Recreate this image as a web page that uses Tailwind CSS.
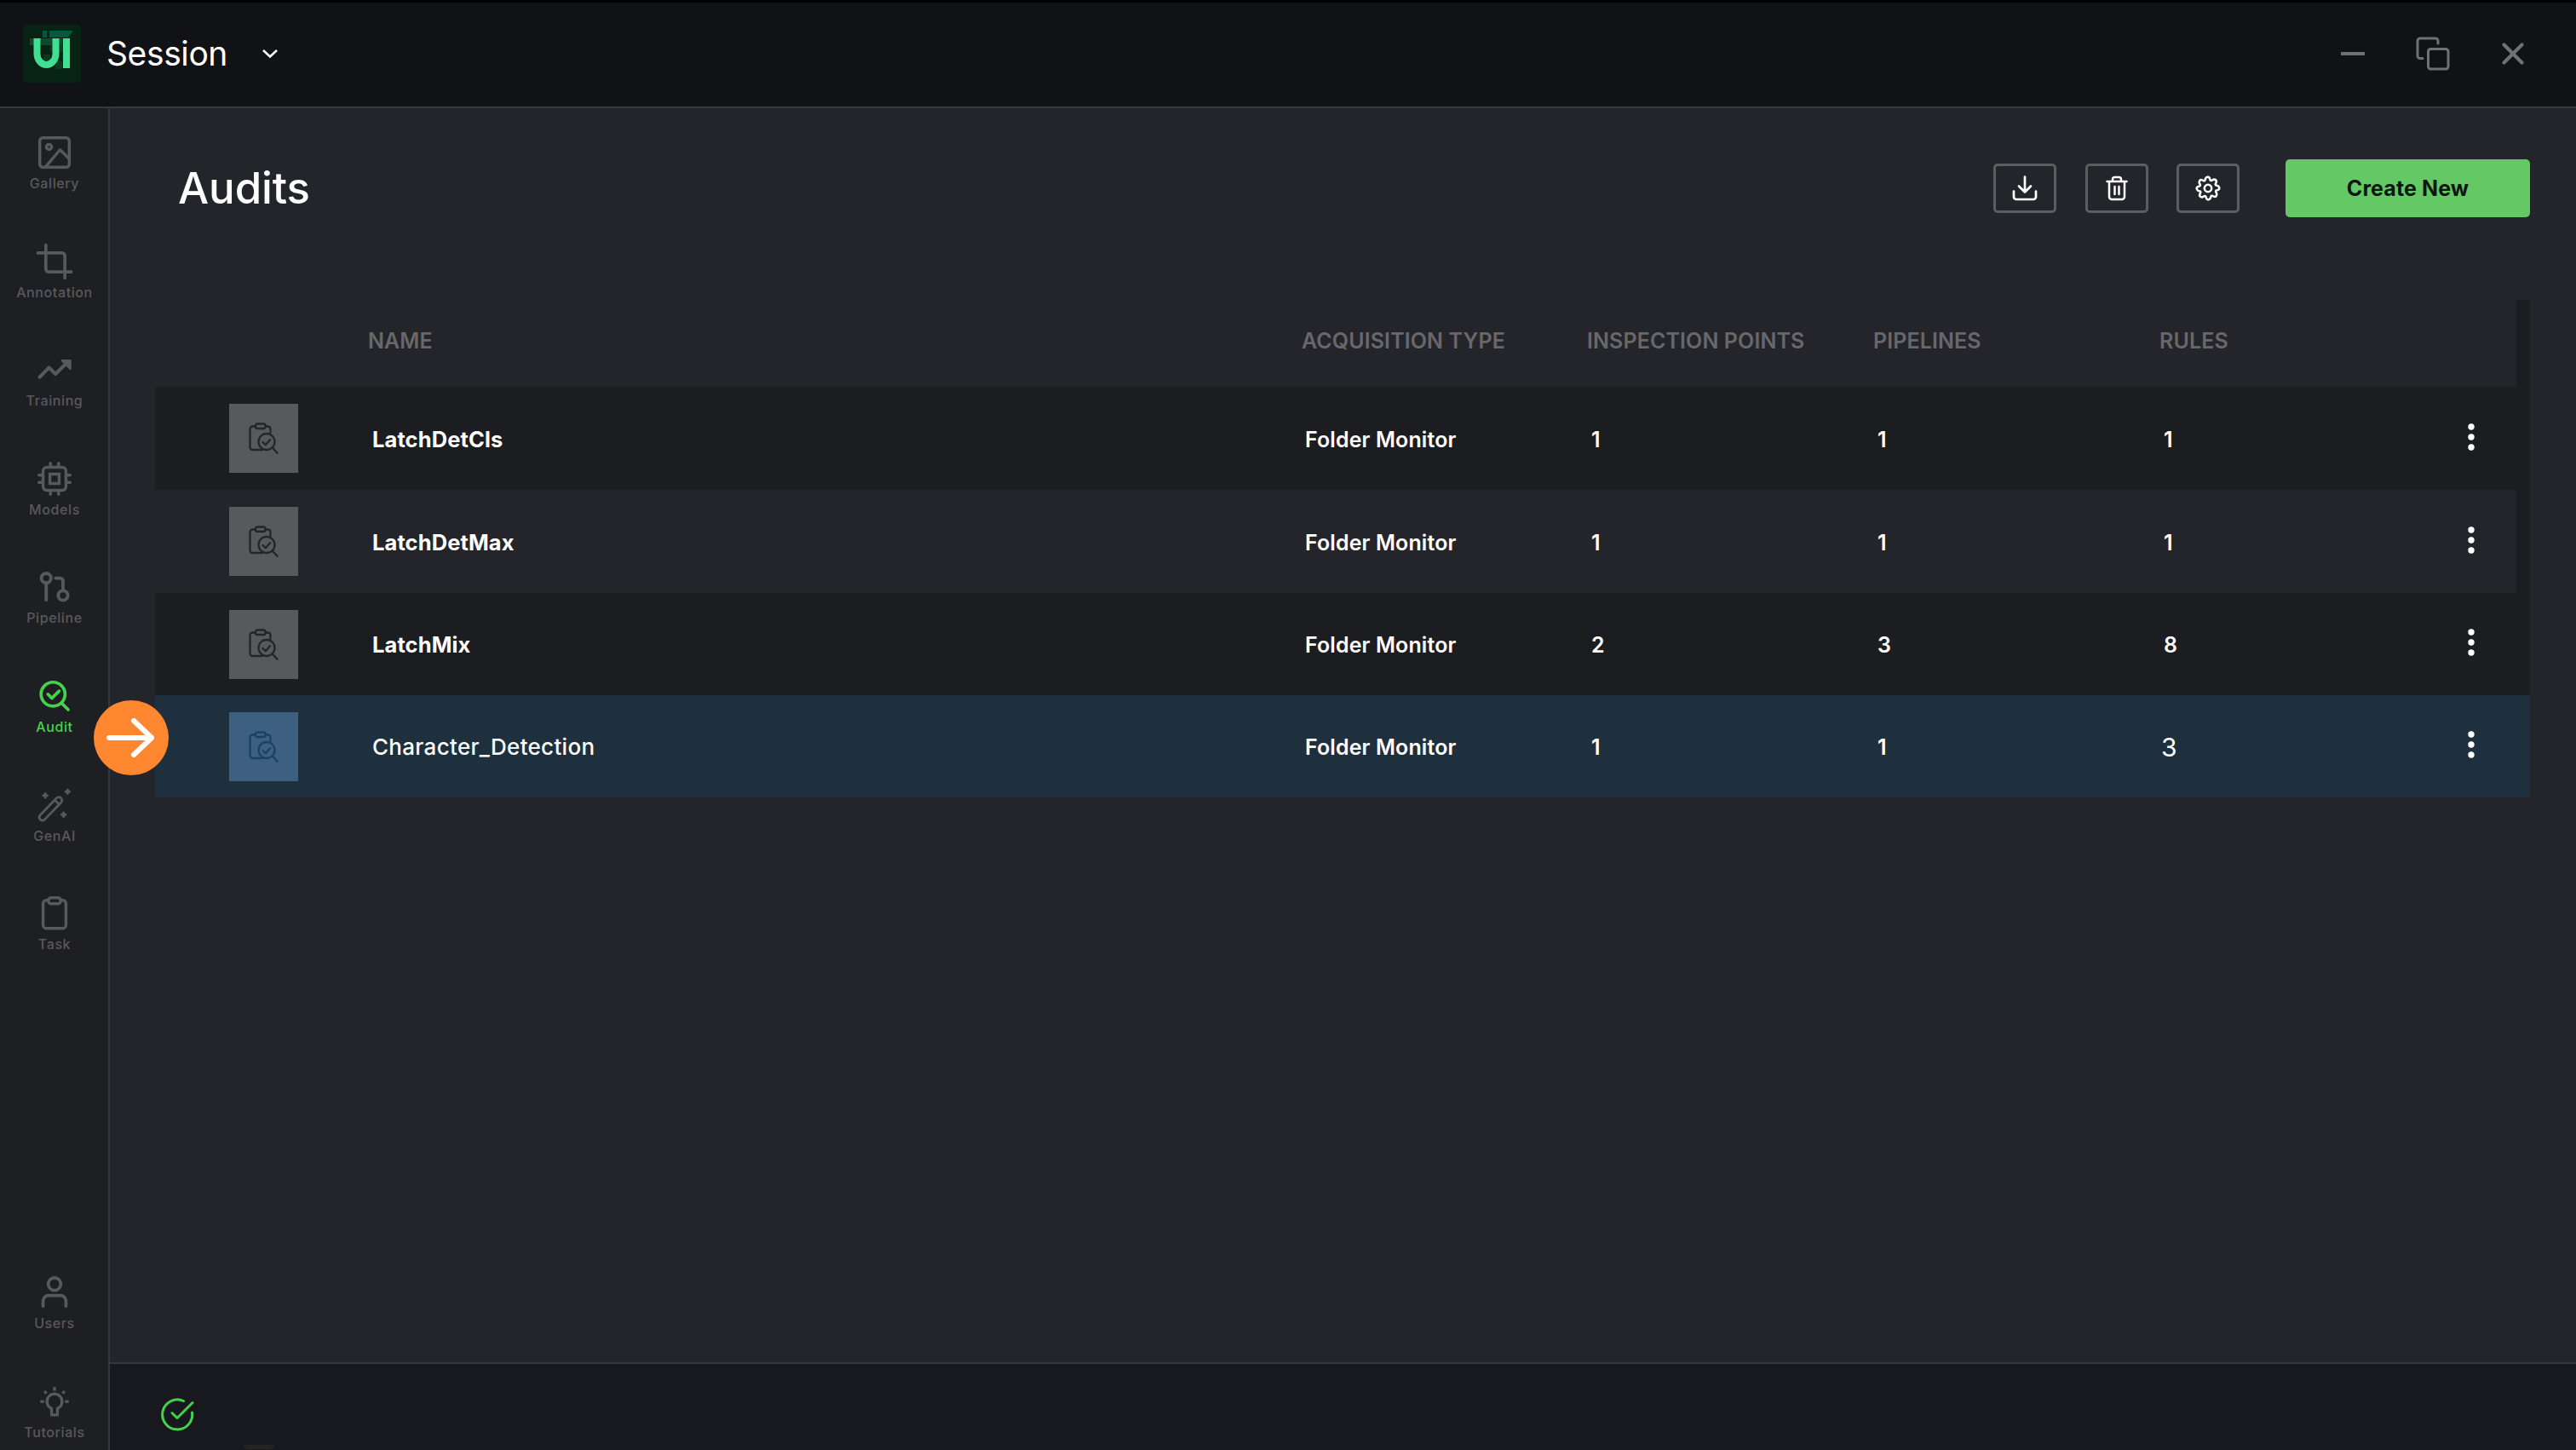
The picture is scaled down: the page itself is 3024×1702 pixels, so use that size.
<!DOCTYPE html>
<html lang="en">
<head>
<meta charset="utf-8">
<title>Audits</title>
<script src="https://cdn.jsdelivr.net/npm/@tailwindcss/browser@4"></script>
</head>
<body class="w-[3024px] h-[1702px] overflow-hidden bg-[#24252a] text-white font-['Inter',sans-serif] flex flex-col relative">

<svg class="hidden">
  <symbol id="audit-item" viewBox="0 0 35 37">
    <g fill="none" stroke="currentColor" stroke-width="2.300" stroke-linecap="round" stroke-linejoin="round">
      <path d="M8 4.500H4.500a3 3 0 0 0-3 3V29a3 3 0 0 0 3 3H16M19.500 4.500h3a3 3 0 0 1 3 3V12"/>
      <rect x="8" y="1.500" width="11.500" height="5.500" rx="2"/>
      <circle cx="21" cy="22.500" r="9.500"/>
      <path d="m16.500 23 3.300 3.300 5.200-6M28 29.800l5.500 6"/>
    </g>
  </symbol>
  <symbol id="dots" viewBox="0 0 8 34">
    <g fill="currentColor"><circle cx="4" cy="5" r="3.700"/><circle cx="4" cy="17" r="3.700"/><circle cx="4" cy="29" r="3.700"/></g>
  </symbol>
  <symbol id="gear-tooth" viewBox="0 0 30 30" overflow="visible">
    <path d="M15 1.800q1.500 0 1.900 1.300L17.500 5q.5 1.300 1.800.8l1.900-1q1.700-.6 3.100.9"/>
  </symbol>
</svg>

<header class="h-[127px] shrink-0 bg-[#111216] border-t-[3px] border-t-black border-b-2 border-b-[#36383d] flex items-center justify-between pl-[27px] pr-[60px] pb-[2px]">
  <div class="flex items-center">
    <svg class="w-[68px] h-[68px]" viewBox="0 0 68 68">
      <rect width="68" height="68" rx="4" fill="#062313"/>
      <path fill="#05593e" d="M23 7h5v8h-5zM31 7h28l-6 8H31z"/>
      <path fill="#0f4a2a" d="M8 16h38v8H8z"/>
      <path fill="#0b3a20" d="M32 24h16v8H32zM24 35h8v7h-8zM38 42h8v10h-8z"/>
      <path fill="none" stroke="#42df92" stroke-width="8" d="M16.500 16v18a11 13 0 0 0 22 0V16M51 16v35"/>
    </svg>
    <span class="ml-[30px] text-[39px] leading-[48px] tracking-[-0.4px]">Session</span>
    <svg class="ml-[41px] w-[18px] h-[12px]" viewBox="0 0 18 12" fill="none" stroke="#fff" stroke-width="2.500"><path d="m1 2 8 7.500L17 2"/></svg>
  </div>
  <div class="flex items-center text-[#707174]">
    <svg class="w-[28px] h-[4px]" viewBox="0 0 28 4"><path fill="currentColor" d="M0 0h28v4H0z"/></svg>
    <svg class="ml-[60px] w-[40px] h-[40px]" viewBox="0 0 40 40" fill="none" stroke="currentColor" stroke-width="3" stroke-linecap="round" stroke-linejoin="round"><rect x="14.500" y="14.500" width="23.500" height="23.500" rx="3"/><path d="M8 25.500H5a3 3 0 0 1-3-3V5a3 3 0 0 1 3-3h18a3 3 0 0 1 3 3v3"/></svg>
    <svg class="ml-[60px] w-[28px] h-[28px]" viewBox="0 0 28 28" fill="none" stroke="currentColor" stroke-width="4.200" stroke-linecap="round"><path d="m3.500 3.500 21 21M24.500 3.500l-21 21"/></svg>
  </div>
</header>

<div class="flex flex-1 min-h-0">
  <nav class="w-[129px] shrink-0 border-r-2 border-[#36383d] bg-[#1e1f23] text-[#59595c] flex flex-col pt-[26px] pl-px text-[16px] leading-[20px] font-medium tracking-[0.6px]">
    <a class="h-[127.600px] shrink-0 flex flex-col items-center">
      <svg class="w-[52px] h-[52px]" viewBox="0 0 24 24" fill="none" stroke="currentColor" stroke-width="1.600" stroke-linejoin="round"><rect x="4" y="4" width="16" height="16" rx="1.800"/><circle cx="9" cy="9" r="1.400"/><path d="M7 20l8-9.500 5 5"/></svg>
      <span>Gallery</span>
    </a>
    <a class="h-[127.600px] shrink-0 flex flex-col items-center">
      <svg class="w-[52px] h-[52px]" viewBox="0 0 24 24" fill="none" stroke="currentColor" stroke-width="1.700" stroke-linecap="round" stroke-linejoin="round"><path d="M7.300 3v13a1.600 1.600 0 0 0 1.600 1.600H21M3 7.300h13A1.600 1.600 0 0 1 17.600 8.900V21"/></svg>
      <span>Annotation</span>
    </a>
    <a class="h-[127.600px] shrink-0 flex flex-col items-center">
      <svg class="w-[52px] h-[52px]" viewBox="0 0 24 24" fill="none" stroke="currentColor" stroke-width="1.900" stroke-linecap="round" stroke-linejoin="round"><path d="M4 16l5-5.200 3.500 3.500L19 8"/><path d="M16 7h4.600v4.600z" fill="currentColor" stroke-width="1"/></svg>
      <span>Training</span>
    </a>
    <a class="h-[127.600px] shrink-0 flex flex-col items-center">
      <svg class="w-[52px] h-[52px]" viewBox="0 0 24 24" fill="none" stroke="currentColor" stroke-width="1.600" stroke-linecap="round"><rect x="5.800" y="5.800" width="12.400" height="12.400" rx="2"/><path stroke-linecap="butt" d="M9.500 9.500h5v5h-5z"/><path d="M9.800 5.500V3.600M14.200 5.500V3.600M9.800 20.400v-1.900M14.200 20.400v-1.900M5.500 10H3.600M5.500 14H3.600M20.400 10h-1.900M20.400 14h-1.900"/></svg>
      <span>Models</span>
    </a>
    <a class="h-[127.600px] shrink-0 flex flex-col items-center">
      <svg class="w-[52px] h-[52px]" viewBox="0 0 24 24" fill="none" stroke="currentColor" stroke-width="1.800" stroke-linecap="round"><circle cx="7.500" cy="7.200" r="2.600"/><circle cx="16.600" cy="16.600" r="2.600"/><path d="M7.500 10v9M12.600 7.200H15a1.600 1.600 0 0 1 1.600 1.600V14"/></svg>
      <span>Pipeline</span>
    </a>
    <a class="h-[127.600px] shrink-0 flex flex-col items-center text-[#43d24a]">
      <svg class="w-[52px] h-[52px]" viewBox="0 0 24 24" fill="none" stroke="currentColor" stroke-width="1.700" stroke-linecap="round" stroke-linejoin="round"><circle cx="11.200" cy="11" r="6.500"/><path d="m16 16 3.400 3.400M8.400 11l2.100 2.200L14.500 9.300"/></svg>
      <span>Audit</span>
    </a>
    <a class="h-[127.600px] shrink-0 flex flex-col items-center">
      <svg class="w-[52px] h-[52px]" viewBox="0 0 24 24" fill="none" stroke="currentColor" stroke-width="1.300" stroke-linecap="round"><rect x="1.800" y="12.300" width="16.200" height="3.400" rx="1.700" transform="rotate(-46 9.900 14)"/><path d="m12.300 9.500 2.300 2.200"/><path stroke-width="1.400" d="M7 5.800v2M6 6.800h2M19.100 3.700v2M18.100 4.700h2M16.900 16.200v2M15.900 17.200h2"/></svg>
      <span>GenAI</span>
    </a>
    <a class="h-[127.600px] shrink-0 flex flex-col items-center">
      <svg class="w-[52px] h-[52px]" viewBox="0 0 24 24" fill="none" stroke="currentColor" stroke-width="1.600" stroke-linejoin="round"><path d="M9 5H7.600a1.800 1.800 0 0 0-1.800 1.800v11.600a1.800 1.800 0 0 0 1.800 1.800h8.800a1.800 1.800 0 0 0 1.800-1.800V6.800A1.800 1.800 0 0 0 16.400 5H15"/><rect x="8.800" y="3.600" width="6.400" height="3.200" rx="1.200"/></svg>
      <span>Task</span>
    </a>
    <div class="flex-1"></div>
    <a class="h-[128px] shrink-0 flex flex-col items-center">
      <svg class="w-[52px] h-[52px]" viewBox="0 0 24 24" fill="none" stroke="currentColor" stroke-width="1.700" stroke-linecap="round"><circle cx="12" cy="7.500" r="3.400"/><path d="M5.800 19.500v-2.800a3 3 0 0 1 3-3h6.400a3 3 0 0 1 3 3v2.800"/></svg>
      <span>Users</span>
    </a>
    <a class="h-[83px] shrink-0 flex flex-col items-center">
      <svg class="w-[52px] h-[52px]" viewBox="0 0 24 24" fill="none" stroke="currentColor" stroke-width="1.500" stroke-linejoin="round"><path d="M10.400 19.300v-3.500a4.100 4.100 0 1 1 3.200 0v3.500z"/><path d="M12 4.200v2M6.500 6.500l1.200 1.200M17.500 6.500l-1.200 1.200M4.300 12h2M17.700 12h2"/></svg>
      <span>Tutorials</span>
    </a>
  </nav>

  <div class="flex-1 min-w-0 flex flex-col">
    <main class="flex-1 min-h-0 pl-[53px] pr-[54px] pt-[60px]">
      <div class="h-[68px] flex items-center">
        <h1 class="ml-[27px] text-[51px] leading-[60px] font-medium tracking-[-0.1px]">Audits</h1>
        <div class="ml-auto flex items-center">
          <button class="w-[74px] h-[58px] border-[3px] border-[#5c5d61] rounded-[5px] flex items-center justify-center">
            <svg class="w-[30px] h-[30px]" viewBox="0 0 30 30" fill="none" stroke="#fff" stroke-width="2.700" stroke-linecap="round" stroke-linejoin="round"><path d="M15 1.500v18M8 12.500l7 7 7-7M2 18.500V25a3 3 0 0 0 3 3h20a3 3 0 0 0 3-3v-6.500"/></svg>
          </button>
          <button class="ml-[34px] w-[74px] h-[58px] border-[3px] border-[#5c5d61] rounded-[5px] flex items-center justify-center">
            <svg class="w-[26px] h-[30px]" viewBox="0 0 26 30" fill="none" stroke="#fff" stroke-width="2.500" stroke-linecap="round" stroke-linejoin="round"><path d="M1.500 7h23M4 7v18a3 3 0 0 0 3 3h12a3 3 0 0 0 3-3V7M8 7V4.500A2.500 2.500 0 0 1 10.500 2h5A2.500 2.500 0 0 1 18 4.500V7M10.500 13v9M15.500 13v9"/></svg>
          </button>
          <button class="ml-[33px] w-[74px] h-[58px] border-[3px] border-[#5c5d61] rounded-[5px] flex items-center justify-center">
            <svg class="w-[30px] h-[30px] overflow-visible" viewBox="0 0 30 30" fill="none" stroke="#fff" stroke-width="2.500" stroke-linecap="round" stroke-linejoin="round">
              <circle cx="15" cy="15" r="4.200"/>
              <use href="#gear-tooth" width="30" height="30"/>
              <use href="#gear-tooth" width="30" height="30" transform="rotate(45 15 15)"/>
              <use href="#gear-tooth" width="30" height="30" transform="rotate(90 15 15)"/>
              <use href="#gear-tooth" width="30" height="30" transform="rotate(135 15 15)"/>
              <use href="#gear-tooth" width="30" height="30" transform="rotate(180 15 15)"/>
              <use href="#gear-tooth" width="30" height="30" transform="rotate(225 15 15)"/>
              <use href="#gear-tooth" width="30" height="30" transform="rotate(270 15 15)"/>
              <use href="#gear-tooth" width="30" height="30" transform="rotate(315 15 15)"/>
            </svg>
          </button>
          <button class="ml-[54px] w-[287px] h-[68px] pt-[2px] rounded-[5px] bg-[#64c964] text-[#0d1511] text-[25px] font-bold tracking-[0.1px]">Create New</button>
        </div>
      </div>

      <section class="mt-[97px] w-[2788px] bg-[#1c1d21] text-[25px] leading-[30px] font-semibold">
        <div class="w-[2772px] h-[102px] pb-[7px] bg-[#24252a] text-[#68686a] tracking-[0.1px] grid grid-cols-[250px_1096px_335px_336px_336px_1fr] items-center">
          <span></span><span>NAME</span><span>ACQUISITION TYPE</span><span>INSPECTION POINTS</span><span>PIPELINES</span><span>RULES</span>
        </div>
        <div class="w-[2772px] h-[121px] tracking-[0.1px] grid grid-cols-[87px_168px_1095px_336px_336px_336px_357px_1fr] items-center">
          <span></span><div class="w-[81px] h-[81px] bg-[#58595d] text-[#242529] flex items-center justify-center"><svg class="w-[35px] h-[37px]"><use href="#audit-item"/></svg></div>
          <span class="pt-[2px] text-[25.500px] font-bold">LatchDetCls</span><span class="pt-[2px]">Folder Monitor</span><span class="pt-[2px]">1</span><span class="pt-[2px]">1</span><span class="pt-[2px]">1</span><svg class="mb-[4px] w-[8px] h-[34px]"><use href="#dots"/></svg>
        </div>
        <div class="w-[2772px] h-[121px] tracking-[0.1px] bg-[#24252a] grid grid-cols-[87px_168px_1095px_336px_336px_336px_357px_1fr] items-center">
          <span></span><div class="w-[81px] h-[81px] bg-[#58595d] text-[#242529] flex items-center justify-center"><svg class="w-[35px] h-[37px]"><use href="#audit-item"/></svg></div>
          <span class="pt-[2px] text-[25.500px] font-bold">LatchDetMax</span><span class="pt-[2px]">Folder Monitor</span><span class="pt-[2px]">1</span><span class="pt-[2px]">1</span><span class="pt-[2px]">1</span><svg class="mb-[4px] w-[8px] h-[34px]"><use href="#dots"/></svg>
        </div>
        <div class="w-[2772px] h-[120px] tracking-[0.1px] grid grid-cols-[87px_168px_1095px_336px_336px_336px_357px_1fr] items-center">
          <span></span><div class="w-[81px] h-[81px] bg-[#58595d] text-[#242529] flex items-center justify-center"><svg class="w-[35px] h-[37px]"><use href="#audit-item"/></svg></div>
          <span class="pt-[2px] text-[25.500px] font-bold">LatchMix</span><span class="pt-[2px]">Folder Monitor</span><span class="pt-[2px]">2</span><span class="pt-[2px]">3</span><span class="pt-[2px]">8</span><svg class="mb-[4px] w-[8px] h-[34px]"><use href="#dots"/></svg>
        </div>
        <div class="w-[2788px] h-[120px] tracking-[0.1px] bg-[#1e2f3e] grid grid-cols-[87px_168px_1095px_336px_336px_336px_357px_1fr] items-center">
          <span></span><div class="w-[81px] h-[81px] bg-[#3d6081] text-[#1a4166] flex items-center justify-center"><svg class="w-[35px] h-[37px]"><use href="#audit-item"/></svg></div>
          <span class="pt-[2px] text-[26px] font-medium tracking-[0.3px]">Character_Detection</span><span class="pt-[2px]">Folder Monitor</span><span class="pt-[2px]">1</span><span class="pt-[2px]">1</span><span class="pt-[2px] -ml-[3px] text-[30px] font-normal">3</span><svg class="mb-[4px] w-[8px] h-[34px]"><use href="#dots"/></svg>
        </div>
      </section>
    </main>
    <footer class="h-[103px] shrink-0 border-t-2 border-[#36383d] bg-[#18191e] pl-[59px] pt-[39px]">
      <svg class="w-[40px] h-[40px]" viewBox="0 0 40 40" fill="none" stroke="#43d24a" stroke-width="3" stroke-linecap="round"><path d="M27.500 4.500A17.500 17.500 0 1 0 37.500 18"/><path stroke-linejoin="round" d="M14 18.500l6 6L38 6.500"/></svg>
    </footer>
  </div>
</div>

<div class="absolute left-[286px] top-[1696px] w-[36px] h-[5px] rounded-b-full bg-[#242424]"></div>
<div class="absolute left-[110px] top-[822px] w-[88px] h-[88px] rounded-full bg-[#ff872f] flex items-center justify-center">
  <svg class="w-[56px] h-[46px] mr-[2px]" viewBox="0 0 56 46" fill="none" stroke="#fff" stroke-width="6" stroke-linecap="round" stroke-linejoin="round"><path d="M3 23h50M32 3l21 20-21 20"/></svg>
</div>
</body>
</html>
